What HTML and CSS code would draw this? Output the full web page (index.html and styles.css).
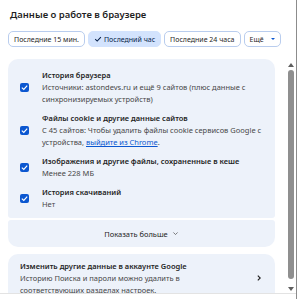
FILE: index.html
```html
<!DOCTYPE html>
<html lang="ru">
<head>
  <meta charset="UTF-8" />
  <title>Удалить данные о работе в браузере</title>
  <link rel="stylesheet" href="styles.css">
</head>
<body>

<div class="dialog">
  <div class="head">
    <h2 class="title">Данные о работе в браузере</h2>
    <div class="chips">
      <button class="chip">Последние 15 мин.</button>
      <button class="chip selected">
        <svg class="chip-check" viewBox="0 0 10 10"><path d="M1.5 5.2 L4 7.6 L8.6 2.6" /></svg>
        Последний час
      </button>
      <button class="chip">Последние 24 часа</button>
      <button class="chip">Ещё <span class="caret"></span></button>
    </div>
  </div>

  <div class="body">
    <div class="scroll">
      <div class="card group-top">
        <div class="item">
          <span class="checkbox"><svg viewBox="0 0 10 10"><path d="M2 5.2 L4.2 7.2 L8 3" /></svg></span>
          <div class="item-text">
            <div class="item-title">История браузера</div>
            <div class="item-desc">Источники: astondevs.ru и ещё 9 сайтов (плюс данные с синхронизируемых устройств)</div>
          </div>
        </div>
        <div class="item">
          <span class="checkbox"><svg viewBox="0 0 10 10"><path d="M2 5.2 L4.2 7.2 L8 3" /></svg></span>
          <div class="item-text">
            <div class="item-title">Файлы cookie и другие данные сайтов</div>
            <div class="item-desc">С 45 сайтов: Чтобы удалить файлы cookie сервисов Google с устройства, <a href="#">выйдите из Chrome</a>.</div>
          </div>
        </div>
        <div class="item">
          <span class="checkbox"><svg viewBox="0 0 10 10"><path d="M2 5.2 L4.2 7.2 L8 3" /></svg></span>
          <div class="item-text">
            <div class="item-title">Изображения и другие файлы, сохраненные в кеше</div>
            <div class="item-desc">Менее 228 МБ</div>
          </div>
        </div>
        <div class="item">
          <span class="checkbox"><svg viewBox="0 0 10 10"><path d="M2 5.2 L4.2 7.2 L8 3" /></svg></span>
          <div class="item-text">
            <div class="item-title">История скачиваний</div>
            <div class="item-desc">Нет</div>
          </div>
        </div>
      </div>

      <div class="card group-bottom more">
        Показать больше
        <svg class="more-icon" viewBox="0 0 10 10"><path d="M2 3.5 L5 6.5 L8 3.5" /></svg>
      </div>

      <div class="card account">
        <div class="account-text">
          <div class="item-title">Изменить другие данные в аккаунте Google</div>
          <div class="item-desc">Историю Поиска и пароли можно удалить в соответствующих разделах настроек.</div>
        </div>
        <svg class="account-arrow" viewBox="0 0 10 10"><path d="M3.5 2 L6.5 5 L3.5 8" /></svg>
      </div>
    </div>

    <div class="scrollbar">
      <span class="sb-up"></span>
      <span class="sb-thumb"></span>
      <span class="sb-down"></span>
    </div>
  </div>

  <div class="footer"></div>
</div>

</body>
</html>
```

FILE: styles.css
```css
  body {
    margin: 0;
    background: #ffffff;
    font-family: "Noto Sans", "Open Sans", sans-serif;
    color: #1f1f1f;
  }
  .dialog {
    width: 296px;
    height: 299px;
    border-right: 1px solid #8c8c8c;
    display: flex;
    flex-direction: column;
    background: #ffffff;
  }
  .head {
    padding: 7px 0 0 8px;
  }
  .title {
    margin: 0 0 0 2px;
    font-size: 9.5px;
    font-weight: 600;
    line-height: 16px;
  }
  .chips {
    display: flex;
    gap: 3px;
    margin-top: 8px;
  }
  .chip {
    display: flex;
    align-items: center;
    gap: 2px;
    height: 16px;
    padding: 0 5px;
    border: 1px solid #b9cdee;
    border-radius: 5px;
    background: #ffffff;
    font-family: inherit;
    font-size: 7px;
    white-space: nowrap;
    color: #1f1f1f;
  }
  .chip.selected {
    background: #d3e3fd;
    border-color: #d3e3fd;
    color: #041e49;
  }
  .chip-check {
    width: 8px;
    height: 8px;
    fill: none;
    stroke: #041e49;
    stroke-width: 1.3;
  }
  .caret {
    width: 0;
    height: 0;
    margin-left: 5px;
    border-left: 2.5px solid transparent;
    border-right: 2.5px solid transparent;
    border-top: 2.5px solid #0b57d0;
  }

  .body {
    display: flex;
    height: 236px;
    margin-top: 10px;
  }
  .scroll {
    flex: 1;
    overflow: hidden;
    padding: 2px 11px 0 8px;
  }
  .card {
    background: #edf2fa;
    border-radius: 10px;
  }
  .group-top {
    border-radius: 10px 10px 3px 3px;
    padding: 10px 0 8px 12px;
    display: flex;
    flex-direction: column;
    gap: 7px;
  }
  .group-bottom {
    border-radius: 3px 3px 10px 10px;
    margin-top: 2px;
  }
  .item {
    display: flex;
    align-items: center;
    gap: 13px;
    padding-right: 12px;
  }
  .checkbox {
    flex: none;
    width: 9px;
    height: 9px;
    border-radius: 2px;
    background: #0b57d0;
    display: flex;
  }
  .checkbox svg {
    width: 9px;
    height: 9px;
    fill: none;
    stroke: #ffffff;
    stroke-width: 1.3;
  }
  .item-title {
    font-size: 7.5px;
    line-height: 12px;
    font-weight: 600;
    color: #1f1f1f;
  }
  .item-desc {
    font-size: 7.5px;
    line-height: 12px;
    color: #474747;
  }
  .item-desc a {
    color: #0b57d0;
  }
  .more {
    height: 27px;
    display: flex;
    align-items: center;
    justify-content: center;
    gap: 4px;
    font-size: 7.5px;
    color: #1f1f1f;
  }
  .more-icon {
    width: 7px;
    height: 7px;
    fill: none;
    stroke: #474747;
    stroke-width: 1;
  }
  .account {
    margin-top: 7px;
    padding: 6px 12px 10px 12px;
    display: flex;
    align-items: center;
    gap: 10px;
  }
  .account-text {
    flex: 1;
  }
  .account-arrow {
    flex: none;
    width: 8px;
    height: 8px;
    fill: none;
    stroke: #1f1f1f;
    stroke-width: 1.4;
  }

  .scrollbar {
    width: 9px;
    display: flex;
    flex-direction: column;
    align-items: center;
    padding: 6px 0 2px;
    margin-right: 1px;
  }
  .sb-up, .sb-down {
    width: 0;
    height: 0;
    border-left: 3.5px solid transparent;
    border-right: 3.5px solid transparent;
  }
  .sb-up {
    border-bottom: 4px solid #5f5f5f;
  }
  .sb-down {
    border-top: 4px solid #5f5f5f;
  }
  .sb-thumb {
    flex: 1;
    width: 6px;
    margin: 3px 0 8px;
    border-radius: 3px;
    background: #8f8f8f;
  }

  .footer {
    flex: 1;
    border-top: 1px solid #e3e3e3;
  }
```
